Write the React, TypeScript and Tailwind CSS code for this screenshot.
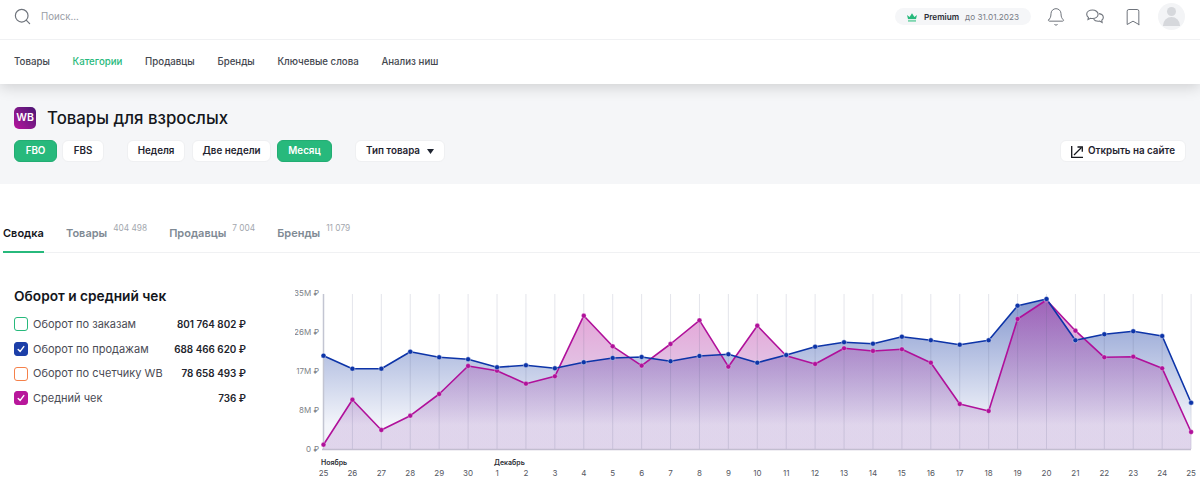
import React from 'react';
import { Search, Bell, Bookmark } from 'lucide-react';

const navItems = ['Товары', 'Категории', 'Продавцы', 'Бренды', 'Ключевые слова', 'Анализ ниш'];

const legend = [
  { label: 'Оборот по заказам', value: '801 764 802 ₽', box: 'border-[#27b97c] bg-white', checked: false },
  { label: 'Оборот по продажам', value: '688 466 620 ₽', box: 'border-[#1c3fa8] bg-[#1c3fa8]', checked: true },
  { label: 'Оборот по счетчику WB', value: '78 658 493 ₽', box: 'border-[#f5814a] bg-white', checked: false },
  { label: 'Средний чек', value: '736 ₽', box: 'border-[#b8179b] bg-[#b8179b]', checked: true },
];

const days = [25, 26, 27, 28, 29, 30, 1, 2, 3, 4, 5, 6, 7, 8, 9, 10, 11, 12, 13, 14, 15, 16, 17, 18, 19, 20, 21, 22, 23, 24, 25];

// y values in page pixels, read off the chart
const blue = [355.7, 368.7, 368.7, 351.7, 357.3, 359.3, 367.3, 365.3, 368.3, 362.3, 358, 357, 361.3, 356, 354.3, 362.7, 355, 346.7, 342.3, 343.7, 336.7, 340.3, 344.7, 340.3, 305.7, 299, 340.3, 334.3, 331.3, 336, 402.7];
const pink = [444.7, 399.7, 430, 415.7, 394, 366, 370.7, 383.7, 376.3, 315.7, 346.3, 365.7, 344, 320.3, 366.7, 325.7, 355.7, 364, 348.3, 351, 349.3, 362.7, 404, 411, 319, 300, 330.7, 357.3, 356.7, 368.3, 432];

const xAt = (i: number) => 323.5 + i * 28.92;
const BASE = 449;

const linePath = (ys: number[]) => ys.map((y, i) => `${i === 0 ? 'M' : 'L'}${xAt(i).toFixed(1)} ${y}`).join(' ');
const areaPath = (ys: number[]) => `${linePath(ys)} L${xAt(ys.length - 1).toFixed(1)} ${BASE} L${xAt(0)} ${BASE} Z`;

function Chart() {
  return (
    <svg width="905" height="236" viewBox="295 253 905 236" className="block shrink-0" style={{ fontFamily: 'Inter, sans-serif' }}>
      <defs>
        <linearGradient id="blueFill" gradientUnits="userSpaceOnUse" x1="0" y1="300" x2="0" y2="425">
          <stop offset="0" stopColor="#0f34a0" stopOpacity="0.5" />
          <stop offset="1" stopColor="#0f34a0" stopOpacity="0.05" />
        </linearGradient>
        <linearGradient id="pinkFill" gradientUnits="userSpaceOnUse" x1="0" y1="300" x2="0" y2="425">
          <stop offset="0" stopColor="#c4189a" stopOpacity="0.42" />
          <stop offset="1" stopColor="#7a2ea0" stopOpacity="0.16" />
        </linearGradient>
      </defs>

      {['35M ₽', '26M ₽', '17M ₽', '8M ₽', '0 ₽'].map((t, i) => (
        <text key={t} x="319" y={296 + i * 38.9} textAnchor="end" fontSize="8" fill="#7d7f88">{t}</text>
      ))}

      <path d={areaPath(blue)} fill="url(#blueFill)" />
      <path d={areaPath(pink)} fill="url(#pinkFill)" />

      {days.map((_, i) => (
        <line key={i} x1={xAt(i)} x2={xAt(i)} y1="294" y2={BASE} stroke="#5a5f80" strokeOpacity="0.16" strokeWidth="1" />
      ))}
      <line x1="323.5" x2="323.5" y1="294" y2={BASE} stroke="#c3c5d2" strokeWidth="1.5" />
      <line x1="322" x2="1191" y1="449.5" y2="449.5" stroke="#c2bdd0" strokeWidth="1.5" />

      <path d={linePath(pink)} fill="none" stroke="#b0109a" strokeWidth="1.6" strokeLinejoin="round" />
      <path d={linePath(blue)} fill="none" stroke="#0d34a8" strokeWidth="1.6" strokeLinejoin="round" />

      {pink.map((y, i) => (
        <circle key={i} cx={xAt(i)} cy={y} r="2.4" fill="#b0109a" stroke="#fff" strokeOpacity="0.45" strokeWidth="0.6" />
      ))}
      {blue.map((y, i) => (
        <circle key={i} cx={xAt(i)} cy={y} r="2.5" fill="#0d34a8" stroke="#fff" strokeOpacity="0.6" strokeWidth="0.7" />
      ))}

      <text x="321" y="465" fontSize="7" fontWeight="600" fill="#2d2f36">Ноябрь</text>
      <text x="494" y="465" fontSize="7" fontWeight="600" fill="#2d2f36">Декабрь</text>
      {days.map((d, i) => (
        <text key={i} x={xAt(i)} y="475.5" textAnchor="middle" fontSize="8" fill="#55575f">{d}</text>
      ))}
    </svg>
  );
}

function Check() {
  return (
    <svg width="8" height="8" viewBox="0 0 10 10" fill="none" stroke="#fff" strokeWidth="1.8" strokeLinecap="round" strokeLinejoin="round">
      <path d="M1.5 5.5 4 8 8.5 2" />
    </svg>
  );
}

function Pill({ children, active, className = '' }: { children: React.ReactNode; active?: boolean; className?: string }) {
  return (
    <button
      className={`h-[22px] pt-[1px] rounded-[6px] flex items-center justify-center text-[9.8px] font-semibold border ${
        active ? 'bg-[#27b97c] border-[#22ad73] text-white' : 'bg-white border-[#eff0f2] text-[#1f2430]'
      } ${className}`}
    >
      {children}
    </button>
  );
}

export default function App() {
  return (
    <div className="w-[1200px] h-[489px] overflow-hidden bg-white flex flex-col" style={{ fontFamily: 'Inter, sans-serif' }}>
      {/* Header */}
      <div className="relative z-10 bg-white shadow-[0_3px_14px_rgba(0,0,0,0.16)]">
        <div className="h-[40px] pb-[6px] border-b border-[#f0f1f3] flex items-center pl-[13px] pr-[15px]">
          <Search className="w-[19px] h-[19px] text-[#6f747c]" strokeWidth={1.5} />
          <span className="ml-[9px] pt-[2px] text-[9.7px] text-[#9a9ea6]">Поиск...</span>

          <div className="ml-auto h-[17px] w-[136px] pt-[1px] rounded-full bg-[#f5f6f8] flex items-center pl-[12px]">
            <svg width="10" height="9" viewBox="0 0 10 9" className="shrink-0">
              <path d="M0 2 2.6 4 5 0.3 7.4 4 10 2 9 6H1Z" fill="#27b97c" />
              <rect x="1" y="6.8" width="8" height="2" fill="#7fd6b0" />
            </svg>
            <span className="ml-[7px] text-[8.2px] font-semibold text-[#2a2d36]">Premium</span>
            <span className="ml-[6px] text-[8.2px] text-[#777b85]">до 31.01.2023</span>
          </div>

          <Bell className="ml-[14.5px] w-[20px] h-[20px] text-[#6f747c]" strokeWidth={1.2} />
          <svg width="18" height="15" viewBox="0 0 18 15" fill="none" stroke="#6f747c" strokeWidth="1.1" className="ml-[20.5px]">
            <path d="M6.5 1C3.5 1 .7 2.6.7 5.3c0 1.3.7 2.4 1.7 3.1L2 10.6l2.5-1.3c.6.2 1.3.2 2 .2 3 0 5.6-1.7 5.6-4.2S9.5 1 6.5 1Z" />
            <path d="M13 4.6c2.4.3 4.3 1.7 4.3 3.8 0 1.1-.6 2.1-1.5 2.7l.3 2.4-2.4-1.4c-.5.1-1 .2-1.6.2-1.9 0-3.6-.7-4.5-2" />
          </svg>
          <Bookmark className="ml-[19px] w-[20px] h-[20px] text-[#6f747c]" strokeWidth={1.2} />
          <div className="ml-[15px] w-[27px] h-[27px] rounded-full bg-[#f3f4f6] flex flex-col items-center justify-center overflow-hidden">
            <div className="w-[9px] h-[9px] rounded-full bg-[#d6d8dc]" />
            <div className="mt-[1px] w-[17px] h-[9px] rounded-t-full rounded-b-[4px] bg-[#d6d8dc]" />
          </div>
        </div>

        <nav className="h-[44px] pt-[1px] flex items-center gap-[22.7px] pl-[14px] text-[9.7px] font-medium text-[#44474f]">
          {navItems.map((item) => (
            <span key={item} className={item === 'Категории' ? 'text-[#27b97c]' : ''}>{item}</span>
          ))}
        </nav>
      </div>

      {/* Category head */}
      <div className="h-[100px] shrink-0 bg-[#f5f6f8] pt-[23px] px-[14px]">
        <div className="flex items-center h-[22px]">
          <div className="w-[22px] h-[22px] rounded-[5px] bg-gradient-to-tr from-[#b80f9e] to-[#4a1272] flex items-center justify-center text-white text-[10.5px] font-semibold">
            WB
          </div>
          <h1 className="ml-[11px] pt-[1px] text-[16.8px] font-medium text-[#14161c]">Товары для взрослых</h1>
        </div>
        <div className="mt-[11px] flex items-center">
          <Pill active className="w-[43px]">FBO</Pill>
          <Pill className="w-[42px] ml-[5px]">FBS</Pill>
          <Pill className="w-[58px] ml-[23px]">Неделя</Pill>
          <Pill className="w-[79px] ml-[7px]">Две недели</Pill>
          <Pill active className="w-[55px] ml-[6px]">Месяц</Pill>
          <Pill className="w-[90px] ml-[23px] gap-[7px]">
            Тип товара
            <svg width="7" height="5" viewBox="0 0 7 5"><path d="M0 0h7L3.5 5Z" fill="#1f2430" /></svg>
          </Pill>
          <Pill className="w-[126px] ml-auto gap-[5px]">
            <svg width="12" height="12" viewBox="0 0 12 12" fill="none" stroke="#14161c" strokeWidth="1.3">
              <path d="M.7 0v11.3H12" />
              <path d="M3 9 10.5 1.5" />
              <path d="M6.5 1h4.8v4.8" />
            </svg>
            Открыть на сайте
          </Pill>
        </div>
      </div>

      {/* Tabs */}
      <div className="h-[69px] shrink-0 flex items-end pl-[3px]">
        <div className="w-full flex items-stretch h-[37px] border-b border-[#f0f1f3] text-[11px] font-semibold text-[#7f8a94]">
          <span className="w-[41px] h-[37px] text-[#14161c] border-b-2 border-[#27b97c] pt-[9px] whitespace-nowrap">Сводка</span>
          <Tab label="Товары" count="404 498" className="ml-[22px]" />
          <Tab label="Продавцы" count="7 004" className="ml-[22px]" />
          <Tab label="Бренды" count="11 079" className="ml-[22px]" />
        </div>
      </div>

      {/* Chart block */}
      <div className="flex flex-1 min-h-0">
        <div className="w-[295px] shrink-0 pl-[14px] pr-[49px] pt-[33px]">
          <h2 className="text-[13.7px] leading-[20px] font-semibold text-[#14161c] whitespace-nowrap">Оборот и средний чек</h2>
          <div className="mt-[6px] flex flex-col">
            {legend.map((row) => (
              <div key={row.label} className="h-[24.7px] flex items-center">
                <span className={`w-[14px] h-[14px] rounded-[3px] border-[1.5px] flex items-center justify-center shrink-0 ${row.box}`}>
                  {row.checked && <Check />}
                </span>
                <span className="ml-[5px] text-[11px] text-[#4a4b55] whitespace-nowrap">{row.label}</span>
                <span className="ml-auto text-[9.9px] font-semibold text-[#22242c] whitespace-nowrap">{row.value}</span>
              </div>
            ))}
          </div>
        </div>
        <Chart />
      </div>
    </div>
  );
}

function Tab({ label, count, className = '' }: { label: string; count: string; className?: string }) {
  return (
    <span className={`flex items-start pt-[9px] whitespace-nowrap ${className}`}>
      {label}
      <span className="ml-[6px] -mt-[3px] text-[8.3px] font-normal text-[#a3a7ae]">{count}</span>
    </span>
  );
}
